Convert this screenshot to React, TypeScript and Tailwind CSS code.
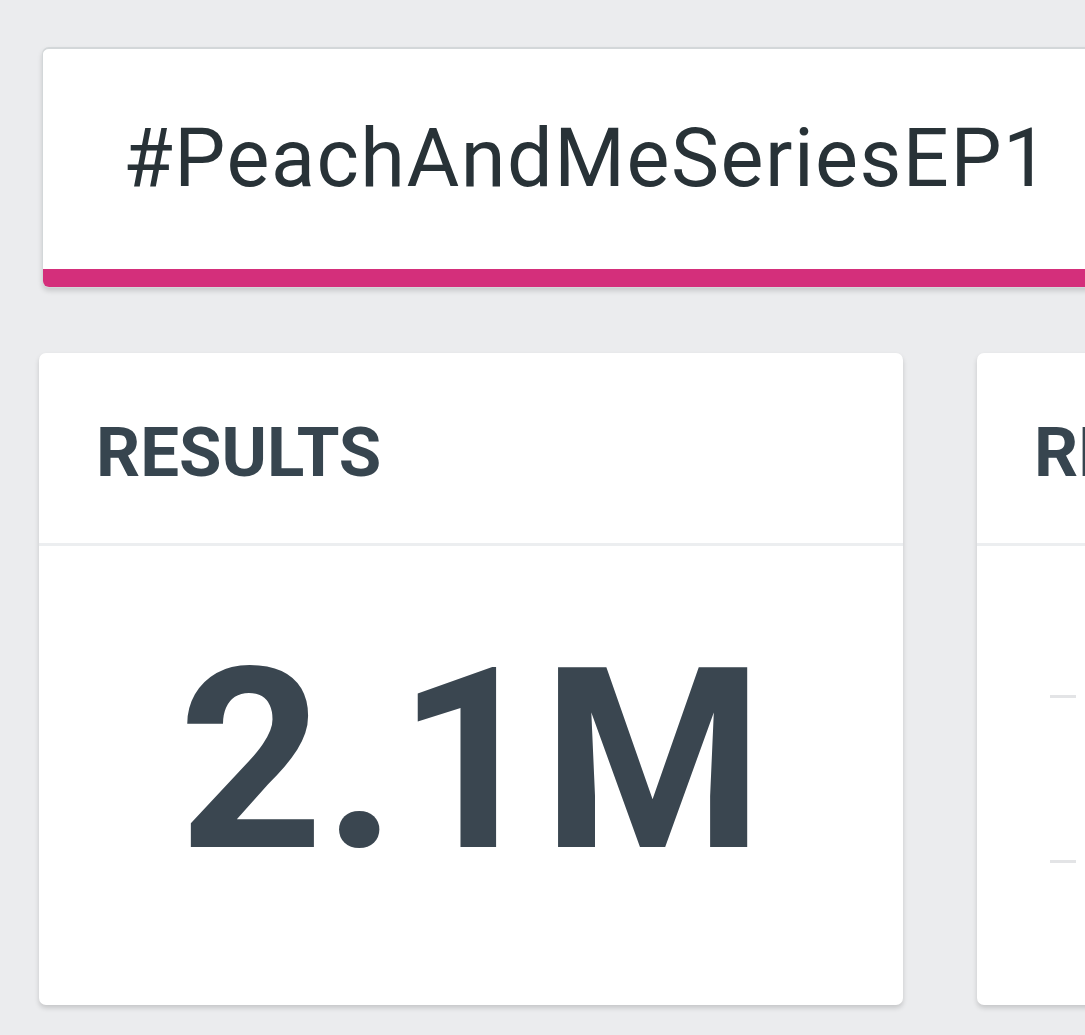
import React from "react";

const font = { fontFamily: "Roboto, 'Noto Sans', sans-serif" };

function StatCard({ title, children }: { title: string; children: React.ReactNode }) {
  return (
    <div className="w-[864px] h-[652px] shrink-0 bg-white rounded-[7px] shadow-[0_3px_5px_rgba(0,0,0,0.16)] flex flex-col overflow-hidden">
      <div className="pl-[57px] pt-[65px] pb-[56px] border-b-[3px] border-[#eceef0]">
        <div className="text-[69px] leading-none font-bold text-[#37454f] whitespace-nowrap">{title}</div>
      </div>
      <div className="flex-1 min-h-0">{children}</div>
    </div>
  );
}

export default function App() {
  return (
    <div className="w-[1085px] h-[1035px] bg-[#ebecee] overflow-hidden" style={font}>
      <div className="pt-[47px] pl-[42px]">
        <div className="w-[1100px] h-[241px] bg-white rounded-[7px] border border-t-2 border-[#d3d7d9] shadow-[0_3px_5px_rgba(0,0,0,0.15)] overflow-hidden flex flex-col">
          <div className="flex-1 pl-[80px] pt-[69px]">
            <div className="text-[81px] leading-none tracking-[1.5px] text-[#283237] whitespace-nowrap">#PeachAndMeSeriesEP1</div>
          </div>
          <div className="h-[18px] bg-[#d42f7b]" />
        </div>
      </div>

      <div className="mt-[65px] pl-[39px] flex gap-[74px]">
        <StatCard title="RESULTS">
          <div className="pt-[88px] text-center text-[253px] leading-none font-bold text-[#3a4650]">2.1M</div>
        </StatCard>
        <StatCard title="REACH">
          <div className="pl-[73px] pt-[149px] flex flex-col gap-[162px]">
            <div className="w-[26px] h-[3px] bg-[#e3e4e6]" />
            <div className="w-[26px] h-[3px] bg-[#e3e4e6]" />
            <div className="w-[26px] h-[3px] bg-[#e3e4e6]" />
          </div>
        </StatCard>
      </div>
    </div>
  );
}
